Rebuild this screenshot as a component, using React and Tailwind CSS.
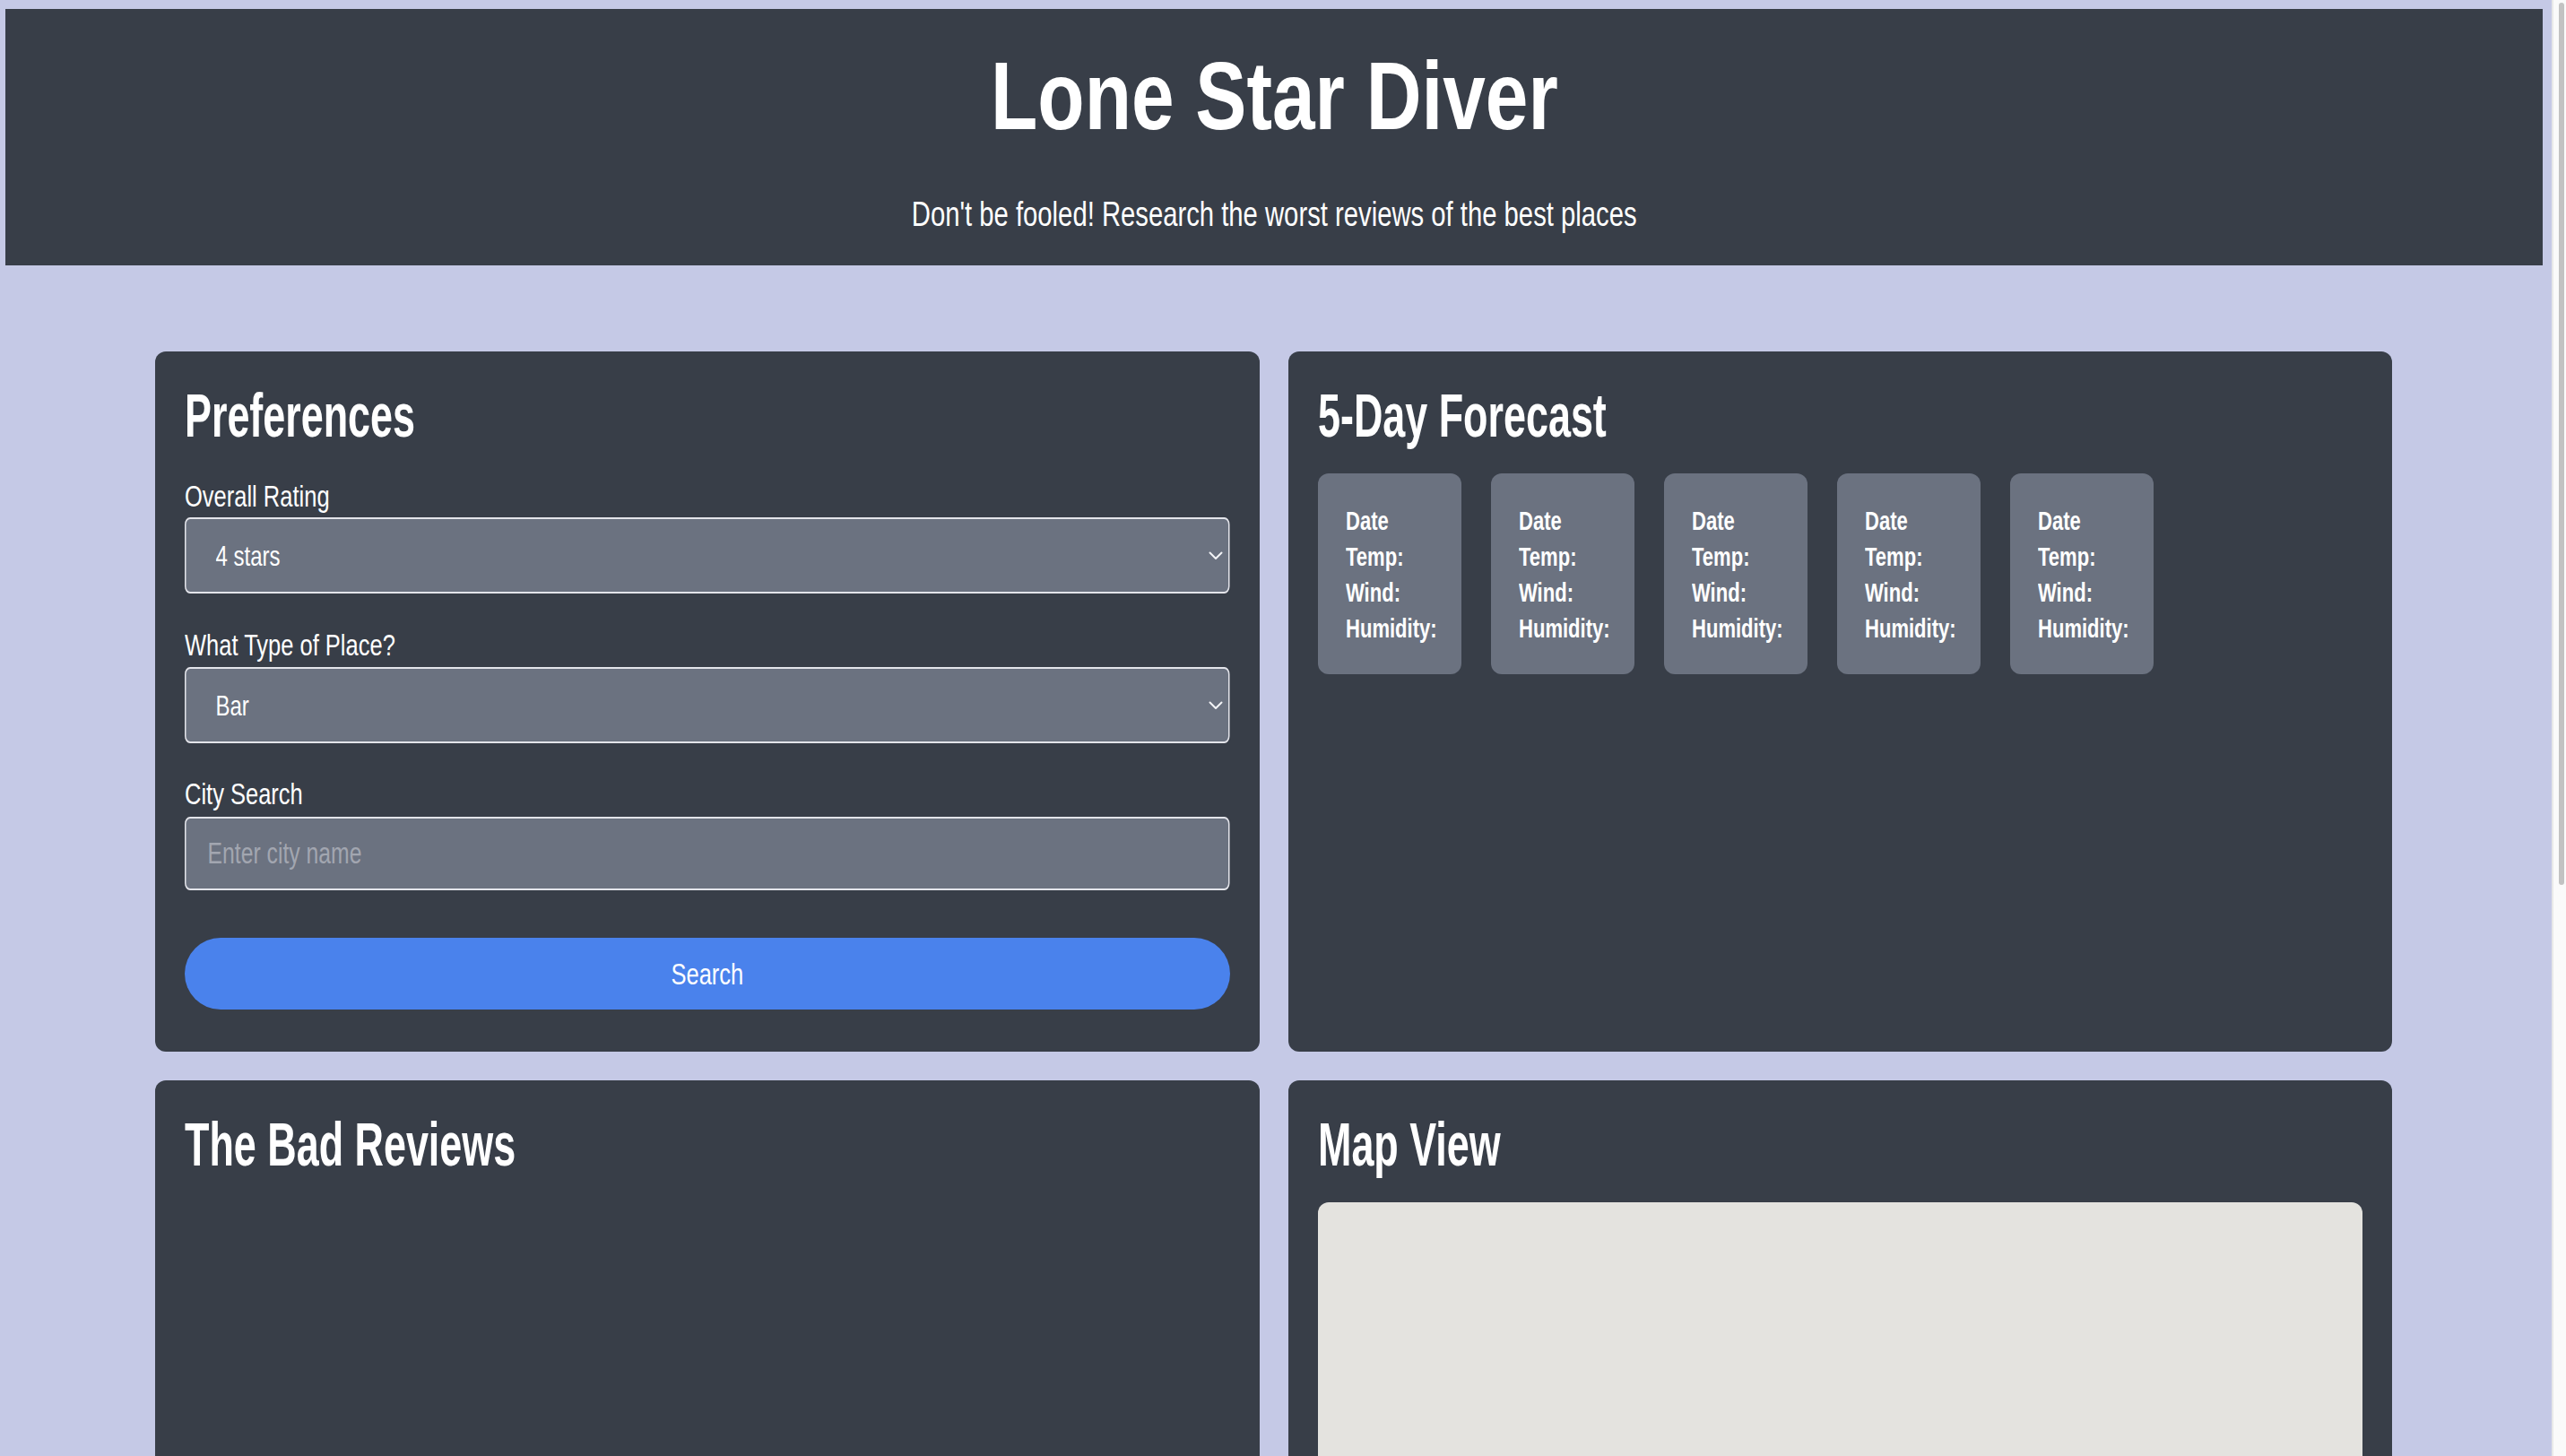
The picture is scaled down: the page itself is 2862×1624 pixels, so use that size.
import { useState } from "react";

const days = [1, 2, 3, 4, 5];

function Chevron() {
  return (
    <svg
      className="pointer-events-none absolute right-[8px] top-1/2 -translate-y-1/2"
      width="16"
      height="10"
      viewBox="0 0 16 10"
      fill="none"
    >
      <polyline points="1.5,1.5 8,8 14.5,1.5" stroke="#f3f4f6" strokeWidth="2" strokeLinecap="round" strokeLinejoin="round" />
    </svg>
  );
}

// labels use a squeezed sans to get the condensed look of the original face
function Field({ label, className, children }) {
  return (
    <div className={className}>
      <div className="h-[40px] whitespace-nowrap">
        <label className="inline-block origin-left scale-x-[0.75] text-[34px] leading-[40px] text-white">
          {label}
        </label>
      </div>
      {children}
    </div>
  );
}

function PanelTitle({ children }) {
  return (
    <div className="h-[72px] whitespace-nowrap">
      <h2 className="inline-block origin-left scale-x-[0.66] text-[68px] leading-[72px] font-bold text-white">
        {children}
      </h2>
    </div>
  );
}

function Select({ value, onChange, children }) {
  return (
    <div className="relative h-[85px]">
      <select
        value={value}
        onChange={onChange}
        className="block w-[133.333%] h-[85px] origin-left scale-x-[0.75] appearance-none rounded-[8px] border-2 border-[#e3e4ea] bg-[#6b7280] pl-[44px] text-[32px] text-white outline-none"
      >
        {children}
      </select>
      <Chevron />
    </div>
  );
}

export default function App() {
  const [rating, setRating] = useState("4");
  const [place, setPlace] = useState("bar");
  const [city, setCity] = useState("");

  return (
    <div className="min-h-screen bg-[#c5c9e6] pt-[10px] pb-[100px] font-['Liberation_Sans',Arial,sans-serif]">
      {/* Header */}
      <header className="ml-[6px] mr-[26px] h-[286px] bg-[#383e48] flex flex-col items-center text-white whitespace-nowrap">
        <h1 className="mt-[44px] inline-block scale-x-[0.8] text-[107px] leading-none font-bold">Lone Star Diver</h1>
        <p className="mt-[58px] inline-block scale-x-[0.75] text-[39px] leading-none">
          Don't be fooled! Research the worst reviews of the best places
        </p>
      </header>

      {/* Panels */}
      <main className="mt-[96px] ml-[173px] w-[2495px] grid grid-cols-2 gap-[32px]">
        {/* Preferences */}
        <section className="rounded-[12px] bg-[#383e48] px-[33px] pt-[35px] pb-[47px]">
          <PanelTitle>Preferences</PanelTitle>

          <Field label="Overall Rating" className="mt-[34px]">
            <div className="mt-[4px]">
              <Select value={rating} onChange={(e) => setRating(e.target.value)}>
                <option value="5">5 stars</option>
                <option value="4">4 stars</option>
                <option value="3">3 stars</option>
              </Select>
            </div>
          </Field>

          <Field label="What Type of Place?" className="mt-[37px]">
            <div className="mt-[5px]">
              <Select value={place} onChange={(e) => setPlace(e.target.value)}>
                <option value="bar">Bar</option>
                <option value="restaurant">Restaurant</option>
                <option value="hotel">Hotel</option>
              </Select>
            </div>
          </Field>

          <Field label="City Search" className="mt-[36px]">
            <div className="mt-[6px] h-[82px]">
              <input
                value={city}
                onChange={(e) => setCity(e.target.value)}
                placeholder="Enter city name"
                className="block w-[133.333%] h-[82px] origin-left scale-x-[0.75] rounded-[8px] border-2 border-[#e3e4ea] bg-[#6b7280] pl-[32px] text-[33px] text-white outline-none placeholder:text-[#a2a6b0]"
              />
            </div>
          </Field>

          <button className="mt-[53px] flex w-full h-[80px] items-center justify-center rounded-full bg-[#4a82ec] text-white">
            <span className="inline-block scale-x-[0.75] text-[34px] leading-none">Search</span>
          </button>
        </section>

        {/* Forecast */}
        <section className="rounded-[12px] bg-[#383e48] px-[33px] pt-[35px]">
          <PanelTitle>5-Day Forecast</PanelTitle>
          <div className="mt-[29px] flex gap-[33px]">
            {days.map((d) => (
              <div
                key={d}
                className="w-[160px] h-[224px] shrink-0 rounded-[12px] bg-[#6b7280] pt-[33px] px-[31px] text-[29px] leading-[40px] font-bold text-white whitespace-nowrap"
              >
                <div className="origin-left scale-x-[0.76]">Date</div>
                <div className="origin-left scale-x-[0.76]">Temp:</div>
                <div className="origin-left scale-x-[0.76]">Wind:</div>
                <div className="origin-left scale-x-[0.76]">Humidity:</div>
              </div>
            ))}
          </div>
        </section>

        {/* Reviews */}
        <section className="rounded-[12px] bg-[#383e48] px-[33px] pt-[35px]">
          <PanelTitle>The Bad Reviews</PanelTitle>
        </section>

        {/* Map */}
        <section className="rounded-[12px] bg-[#383e48] px-[33px] pt-[35px] pb-[32px]">
          <PanelTitle>Map View</PanelTitle>
          <div className="mt-[29px] h-[1200px] rounded-[12px] bg-[#e4e3df]" />
        </section>
      </main>

      {/* Scrollbar strip */}
      <div className="fixed right-0 top-0 h-screen w-[16px] border-l-2 border-[#e8e8e8] bg-[#fafafa] pt-[3px] pl-[6px] pr-[2px]">
        <div className="h-[984px] rounded-full bg-[#c2c2c2]" />
      </div>
    </div>
  );
}
